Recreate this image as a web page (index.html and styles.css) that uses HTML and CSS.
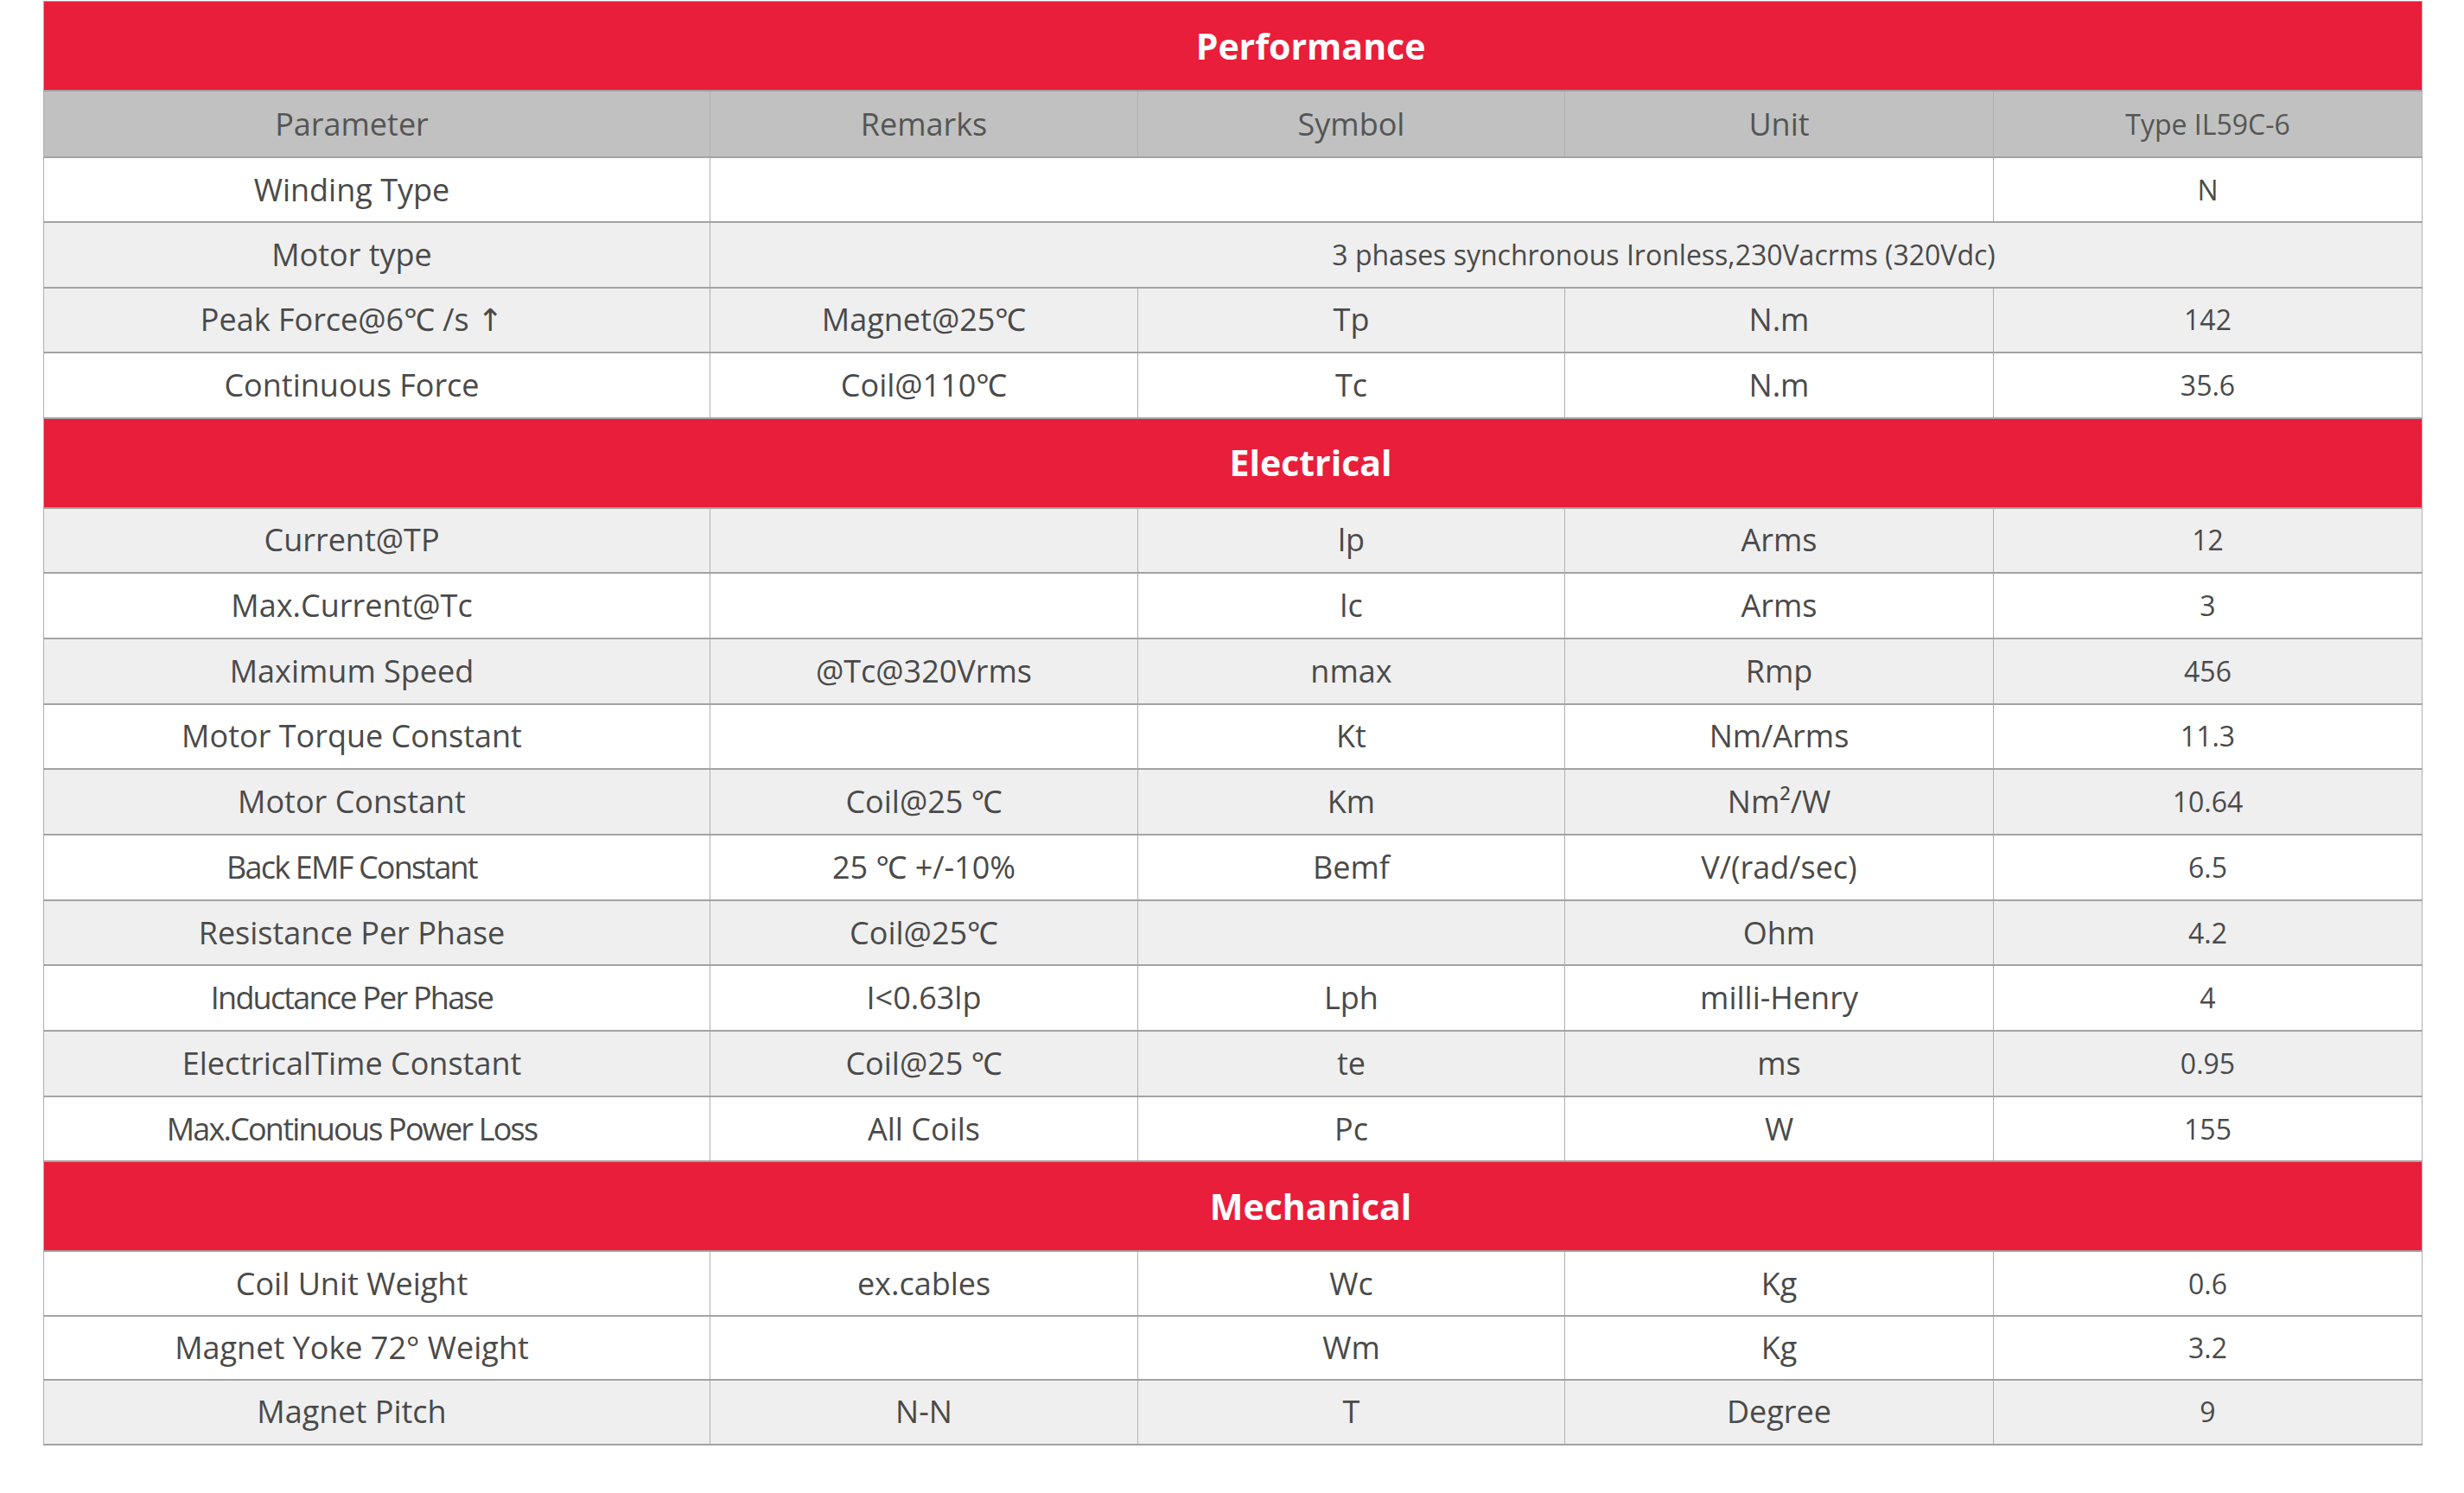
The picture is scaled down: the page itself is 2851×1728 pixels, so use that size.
FILE: index.html
```html
<!DOCTYPE html>
<html>
<head>
<meta charset="utf-8">
<link rel="stylesheet" href="styles.css">
</head>
<body>
<div class="wrap">
<table class="spec">
  <colgroup>
    <col class="c1"><col class="c2"><col class="c3"><col class="c4"><col class="c5">
  </colgroup>
  <tbody>
    <tr class="sec"><td colspan="5"><span class="sec-title">Performance</span></td></tr>
    <tr class="head">
      <td class="p">Parameter</td><td>Remarks</td><td>Symbol</td><td>Unit</td><td class="v">Type IL59C-6</td>
    </tr>
    <tr class="w"><td class="p">Winding Type</td><td colspan="3"></td><td class="v">N</td></tr>
    <tr class="g"><td class="p">Motor type</td><td colspan="4" class="merged">3 phases synchronous Ironless,230Vacrms (320Vdc)</td></tr>
    <tr class="g"><td class="p">Peak Force@6℃ /s ↑</td><td>Magnet@25℃</td><td>Tp</td><td>N.m</td><td class="v">142</td></tr>
    <tr class="w"><td class="p">Continuous Force</td><td>Coil@110℃</td><td>Tc</td><td>N.m</td><td class="v">35.6</td></tr>

    <tr class="sec"><td colspan="5"><span class="sec-title">Electrical</span></td></tr>
    <tr class="g e"><td class="p">Current@TP</td><td></td><td>lp</td><td>Arms</td><td class="v">12</td></tr>
    <tr class="w e"><td class="p">Max.Current@Tc</td><td></td><td>lc</td><td>Arms</td><td class="v">3</td></tr>
    <tr class="g e"><td class="p">Maximum Speed</td><td>@Tc@320Vrms</td><td>nmax</td><td>Rmp</td><td class="v">456</td></tr>
    <tr class="w e"><td class="p">Motor Torque Constant</td><td></td><td>Kt</td><td>Nm/Arms</td><td class="v">11.3</td></tr>
    <tr class="g e"><td class="p">Motor Constant</td><td>Coil@25 ℃</td><td>Km</td><td>Nm²/W</td><td class="v">10.64</td></tr>
    <tr class="w e"><td class="p tight">Back EMF Constant</td><td>25 ℃ +/-10%</td><td>Bemf</td><td>V/(rad/sec)</td><td class="v">6.5</td></tr>
    <tr class="g e"><td class="p">Resistance Per Phase</td><td>Coil@25℃</td><td></td><td>Ohm</td><td class="v">4.2</td></tr>
    <tr class="w e"><td class="p tight">Inductance Per Phase</td><td>I&lt;0.63lp</td><td>Lph</td><td>milli-Henry</td><td class="v">4</td></tr>
    <tr class="g e"><td class="p">ElectricalTime Constant</td><td>Coil@25 ℃</td><td>te</td><td>ms</td><td class="v">0.95</td></tr>
    <tr class="w e"><td class="p tight">Max.Continuous Power Loss</td><td>All Coils</td><td>Pc</td><td>W</td><td class="v">155</td></tr>

    <tr class="sec"><td colspan="5"><span class="sec-title">Mechanical</span></td></tr>
    <tr class="w m"><td class="p">Coil Unit Weight</td><td>ex.cables</td><td>Wc</td><td>Kg</td><td class="v">0.6</td></tr>
    <tr class="w m"><td class="p">Magnet Yoke 72° Weight</td><td></td><td>Wm</td><td>Kg</td><td class="v">3.2</td></tr>
    <tr class="g m"><td class="p">Magnet Pitch</td><td>N-N</td><td>T</td><td>Degree</td><td class="v">9</td></tr>
  </tbody>
</table>
</div>
</body>
</html>
```

FILE: styles.css
```css
html, body {
  margin: 0;
  padding: 0;
  background: #ffffff;
}
.wrap {
  padding: 1px 0 0 50px;
}
.spec {
  border-collapse: collapse;
  table-layout: fixed;
  width: 2752px;
  font-family: "Open Sans", "Noto Sans", "DejaVu Sans", sans-serif;
  color: #4a4a4a;
  border: 1px solid #9a9a9a;
}
.c1 { width: 771px; }
.c2 { width: 495px; }
.c3 { width: 494px; }
.c4 { width: 496px; }
.c5 { width: 496px; }

.spec td {
  text-align: center;
  vertical-align: middle;
  font-size: 36px;
  line-height: 1;
  padding: 0;
  height: 73.4px;
  border-top: 2px solid #a3a3a3;
  border-bottom: 2px solid #a3a3a3;
  border-left: 1px solid #b0b0b0;
  border-right: 1px solid #b0b0b0;
}
.spec tr.e td { height: 73.7px; }
.spec tr.m td { height: 72.4px; }
.spec tr.sec td {
  background: #e81e3b;
  color: #ffffff;
  font-weight: 700;
  font-size: 41px;
  height: 102px;
  padding-left: 180px;
  border-top: 1px solid #a0a0a0;
  border-bottom: 1px solid #8a8a8a;
}
.spec tr.head td {
  background: #c0c1c0;
  color: #555555;
  height: 75px;
}
.spec tr.w td { background: #ffffff; }
.spec tr.g td { background: #efefef; }

.spec td.p {
  padding-right: 58px;
}
.spec td.v,
.spec td.merged {
  font-size: 32px;
}
.spec td.merged {
  padding-left: 226px;
}
.spec td.tight {
  letter-spacing: -1.8px;
}
```
